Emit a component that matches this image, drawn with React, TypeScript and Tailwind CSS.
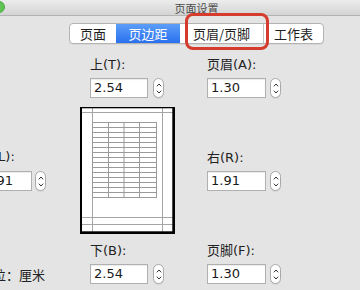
import React from "react";

const LAT = { fontFamily: '"DejaVu Sans", "Noto Sans CJK SC", sans-serif' };

function Stepper() {
  return (
    <div className="w-[11px] h-[20px] rounded-[6px] border border-[#a8a8a8] bg-white flex flex-col items-center justify-center gap-[3px] shadow-[0_1px_0_rgba(0,0,0,0.06)]">
      <svg width="6" height="4" viewBox="0 0 6 4">
        <path d="M0.8 3.3 L3 1 L5.2 3.3" fill="none" stroke="#333" strokeWidth="1" />
      </svg>
      <svg width="6" height="4" viewBox="0 0 6 4">
        <path d="M0.8 0.7 L3 3 L5.2 0.7" fill="none" stroke="#333" strokeWidth="1" />
      </svg>
    </div>
  );
}

function Field({ value, w, gap }: { value: string; w: string; gap: string }) {
  return (
    <div className={`flex items-center ${gap}`}>
      <div
        className={`${w} h-[20px] bg-white border border-[#b0b0b0] shadow-[inset_0_1px_1px_rgba(0,0,0,0.08)] flex items-center pl-[3px] text-[13px] text-[#1a1a1a]`}
        style={LAT}
      >
        {value}
      </div>
      <Stepper />
    </div>
  );
}

function Label({ children }: { children: React.ReactNode }) {
  return (
    <div className="h-[16px] leading-[16px] text-[13px] text-[#222] whitespace-nowrap" style={LAT}>
      {children}
    </div>
  );
}

function Preview() {
  const rows: number[] = [];
  for (let i = 0; i <= 15; i++) rows.push(15 + i * 5);
  const cols = [12, 28, 43.5, 59, 76];
  return (
    <svg width="95" height="127" viewBox="0 0 95 127" className="block">
      <rect x="0" y="0" width="95" height="127" fill="#fff" />
      {/* margin guides */}
      <line x1="12.5" y1="0" x2="12.5" y2="127" stroke="#a5a5a5" strokeWidth="1" />
      <line x1="82.5" y1="0" x2="82.5" y2="127" stroke="#a5a5a5" strokeWidth="1" />
      <line x1="0" y1="5.5" x2="95" y2="5.5" stroke="#a5a5a5" strokeWidth="1" />
      <line x1="0" y1="110.5" x2="95" y2="110.5" stroke="#a5a5a5" strokeWidth="1" />
      <line x1="0" y1="117.5" x2="95" y2="117.5" stroke="#a5a5a5" strokeWidth="1" />
      {/* table */}
      {rows.map((y) => (
        <line key={"r" + y} x1="12" y1={y + 0.5} x2="76.5" y2={y + 0.5} stroke="#9a9a9a" strokeWidth="1" />
      ))}
      {cols.map((x) => (
        <line key={"c" + x} x1={x + 0.5} y1="15" x2={x + 0.5} y2="91" stroke="#9a9a9a" strokeWidth="1" />
      ))}
      {/* page border */}
      <rect x="0" y="0" width="2" height="127" fill="#000" />
      <rect x="0" y="0" width="95" height="1.3" fill="#000" />
      <rect x="92.3" y="0" width="2.7" height="127" fill="#000" />
      <rect x="0" y="124.3" width="95" height="2.7" fill="#000" />
    </svg>
  );
}

export default function App() {
  const tabs = [
    { t: "页面", w: "w-[46px]", active: false },
    { t: "页边距", w: "w-[64px]", active: true },
    { t: "页眉/页脚", w: "w-[83px]", active: false },
    { t: "工作表", w: "w-[60px]", active: false },
  ];
  return (
    <div className="w-[360px] h-[290px] overflow-hidden relative bg-[#e4e4e4]" style={LAT}>
      <div className="w-[393px]">
        {/* title bar */}
        <div className="relative h-[16px] bg-gradient-to-b from-[#ececec] to-[#d4d4d4] border-b border-[#b4b4b4] flex items-center justify-center">
          <div className="absolute left-[-7px] top-[1px] w-[12px] h-[12px] rounded-full bg-[#5fc454] border border-[#4aa83f]" />
          <span className="text-[11px] leading-[14px] text-[#4a4a4a]" style={{ fontFamily: '"Noto Sans CJK SC", sans-serif' }}>
            页面设置
          </span>
        </div>
        {/* tabs */}
        <div className="mt-[7px] flex justify-center">
          <div className="flex h-[21px] rounded-[4px] border border-[#b3b3b3] bg-white overflow-hidden shadow-[0_1px_0_rgba(0,0,0,0.05)]">
            {tabs.map((tb, i) => (
              <div
                key={tb.t}
                className={`${tb.w} flex items-center justify-center text-[13px] ${
                  tb.active
                    ? "bg-gradient-to-b from-[#5b9df8] to-[#2a70ee] text-white"
                    : "text-[#1e1e1e]"
                } ${i > 0 && !tb.active && !tabs[i - 1].active ? "border-l border-[#c4c4c4]" : ""}`}
                style={{ fontFamily: '"Noto Sans CJK SC", sans-serif' }}
              >
                {tb.t}
              </div>
            ))}
          </div>
        </div>
        {/* content */}
        <div className="flex items-start">
          {/* left column (cut off) */}
          <div className="ml-[-20px] w-[100px] flex flex-col">
            <div className="mt-[105px]">
              <Label>左(L):</Label>
            </div>
            <div className="mt-[6px]">
              <Field value="1.91" w="w-[52px]" gap="gap-[3px]" />
            </div>
            <div className="mt-[77px]">
              <Label>单位：厘米</Label>
            </div>
          </div>
          {/* middle column */}
          <div className="w-[94px] flex flex-col">
            <div className="mt-[13px] pl-[10px]">
              <Label>上(T):</Label>
            </div>
            <div className="mt-[5px] pl-[10px]">
              <Field value="2.54" w="w-[58px]" gap="gap-[5px]" />
            </div>
            <div className="mt-[9px]">
              <Preview />
            </div>
            <div className="mt-[9px] pl-[10px]">
              <Label>下(B):</Label>
            </div>
            <div className="mt-[5px] pl-[10px]">
              <Field value="2.54" w="w-[58px]" gap="gap-[5px]" />
            </div>
          </div>
          {/* right column */}
          <div className="ml-[33px] flex flex-col">
            <div className="mt-[13px]">
              <Label>页眉(A):</Label>
            </div>
            <div className="mt-[5px]">
              <Field value="1.30" w="w-[59px]" gap="gap-[4px]" />
            </div>
            <div className="mt-[52px]">
              <Label>右(R):</Label>
            </div>
            <div className="mt-[5px]">
              <Field value="1.91" w="w-[59px]" gap="gap-[4px]" />
            </div>
            <div className="mt-[52px]">
              <Label>页脚(F):</Label>
            </div>
            <div className="mt-[5px]">
              <Field value="1.30" w="w-[59px]" gap="gap-[4px]" />
            </div>
          </div>
        </div>
      </div>
      {/* red annotation box */}
      <div className="absolute left-[185px] top-[13px] w-[84px] h-[37px] rounded-[8px] border-[3px] border-[#d63c2e]" />
    </div>
  );
}
